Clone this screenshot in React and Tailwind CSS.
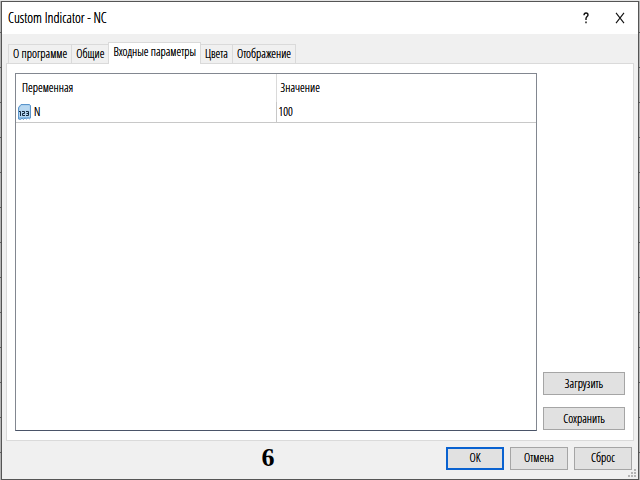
import React from "react";

const tabs = ["О программе", "Общие", "Входные параметры", "Цвета", "Отображение"];
const params = [{name: "N", value: "100"}];

const NumberIcon = () => (
    <svg className="h-4 w-[13px] shrink-0" viewBox="0 0 13 16" aria-hidden="true">
        <path d="M3 .5H11.5L12.5 1.5V14L11.5 14.8 10 13.8 8.5 15 7 14 5.5 15.4 4 14.2 2.5 15.5 .5 15V3.5Z" fill="#86b9e4" stroke="#5b95cb"/>
        <path d="M3.4 1.2H11L11.8 2V6H1.3V4Z" fill="#b9d8f1"/>
        <rect x="1" y="6" width="11" height="7" fill="#b4d5f0"/>
        <path d="M1 7.5H2.5V12M4 7.5H6.5V9.5H4.5V11.5H7M8 7.5H10.5V11.5H8M8.5 9.5H10.5" fill="none" stroke="#12283e"/>
    </svg>
);

const Button = ({primary, className = "", children}) => (
    <button
        type="button"
        className={`h-[23px] bg-[#e1e1e1] text-center leading-4 [text-shadow:inherit] ${primary ? "border-2 border-[#0a62d0]" : "border border-[#a5a5a5]"} ${className}`}
    >
        {children}
    </button>
);

class App extends React.Component {
    state = {tab: 2};

    render() {
        const {tab} = this.state;
        return (
            <div className="h-screen border-t border-[#e4e4e4] bg-[repeating-linear-gradient(#b4b4b4_0px,#b4b4b4_31px,#606060_31px,#606060_32px,#b4b4b4_32px,#b4b4b4_35px)] px-px font-['Open_Sans_Condensed_Light','Open_Sans_Condensed','Roboto_Condensed',sans-serif] text-xs leading-4 text-black [text-shadow:0_0_0_#000]">
                <div className="relative flex h-full flex-col border border-[#555] bg-[#f0f0f0]">
                    <header className="flex h-8 shrink-0 items-center bg-white pl-1.5 pr-3">
                        <h1 className="flex-1 text-sm">Custom Indicator - NC</h1>
                        <button type="button" aria-label="Help" className="mr-5 flex h-5 w-4 items-center justify-center">
                            <svg className="h-3 w-2" viewBox="0 0 8 12" fill="none" stroke="#111" strokeWidth="1.4">
                                <path d="M2 3.2C2 1.5 2.8 1 4 1S6 1.7 6 3 4 4.8 4 6.5V8M4 9.6V11.2"/>
                            </svg>
                        </button>
                        <button type="button" aria-label="Close" className="flex h-5 w-3 items-center justify-center">
                            <svg className="h-3 w-2.5" viewBox="0 0 10 12" fill="none" stroke="#111" strokeWidth="1.1">
                                <path d="M1 .8 9 11.2M9 .8 1 11.2"/>
                            </svg>
                        </button>
                    </header>

                    <div role="tablist" className="flex shrink-0 items-end pt-2 pl-1.5">
                        {tabs.map((label, i) => (
                            <button
                                key={label}
                                type="button"
                                role="tab"
                                aria-selected={i === tab}
                                onClick={() => this.setState({tab: i})}
                                className={i === tab
                                    ? "z-10 -mb-px -ml-px h-[22px] border border-b-0 border-[#dadada] bg-white px-1 pb-1 [text-shadow:inherit]"
                                    : "h-[19px] border border-b-0 border-l-0 border-[#dadada] bg-[#f0f0f0] px-1 [text-shadow:inherit] first:border-l"}
                            >
                                {label}
                            </button>
                        ))}
                    </div>

                    <main className="mx-1 flex flex-1 border border-[#dadada] bg-white px-2 py-[9px]">
                        <div className="flex-1 border border-[#828790] border-b-[#4a5468]">
                            <table className="w-full table-fixed border-collapse text-left">
                                <thead>
                                    <tr className="h-7">
                                        <th className="w-1/2 border-r border-[#dadada] px-1.5 font-normal">Переменная</th>
                                        <th className="px-1 font-normal">Значение</th>
                                    </tr>
                                </thead>
                                <tbody>
                                    {params.map((p) => (
                                        <tr key={p.name} className="h-5 border-b border-[#c8c8c8]">
                                            <td className="border-r border-[#c8c8c8] px-0.5">
                                                <span className="flex items-center gap-[3px]"><NumberIcon/>{p.name}</span>
                                            </td>
                                            <td className="px-0.5">{p.value}</td>
                                        </tr>
                                    ))}
                                </tbody>
                            </table>
                        </div>
                        <div className="ml-1.5 flex w-[82px] flex-col justify-end gap-3 pb-px">
                            <Button>Загрузить</Button>
                            <Button>Сохранить</Button>
                        </div>
                    </main>

                    <footer className="flex h-[38px] shrink-0 items-center pr-1.5 pb-1">
                        <span className="flex-1 pl-[88px] text-center font-['Liberation_Serif',serif] text-[26px] font-bold text-black [text-shadow:none]">6</span>
                        <div className="flex gap-1.5">
                            <Button primary className="w-[58px]">OK</Button>
                            <Button className="w-[58px]">Отмена</Button>
                            <Button className="w-[58px]">Сброс</Button>
                        </div>
                    </footer>
                    <svg className="absolute right-0.5 bottom-0.5 h-2 w-2" viewBox="0 0 8 8" fill="#b4b4b4" aria-hidden="true">
                        <path d="M6 0H8V2H6ZM6 3H8V5H6ZM6 6H8V8H6ZM3 3H5V5H3ZM3 6H5V8H3ZM0 6H2V8H0Z"/>
                    </svg>
                </div>
            </div>
        );
    }
}

export default App;
